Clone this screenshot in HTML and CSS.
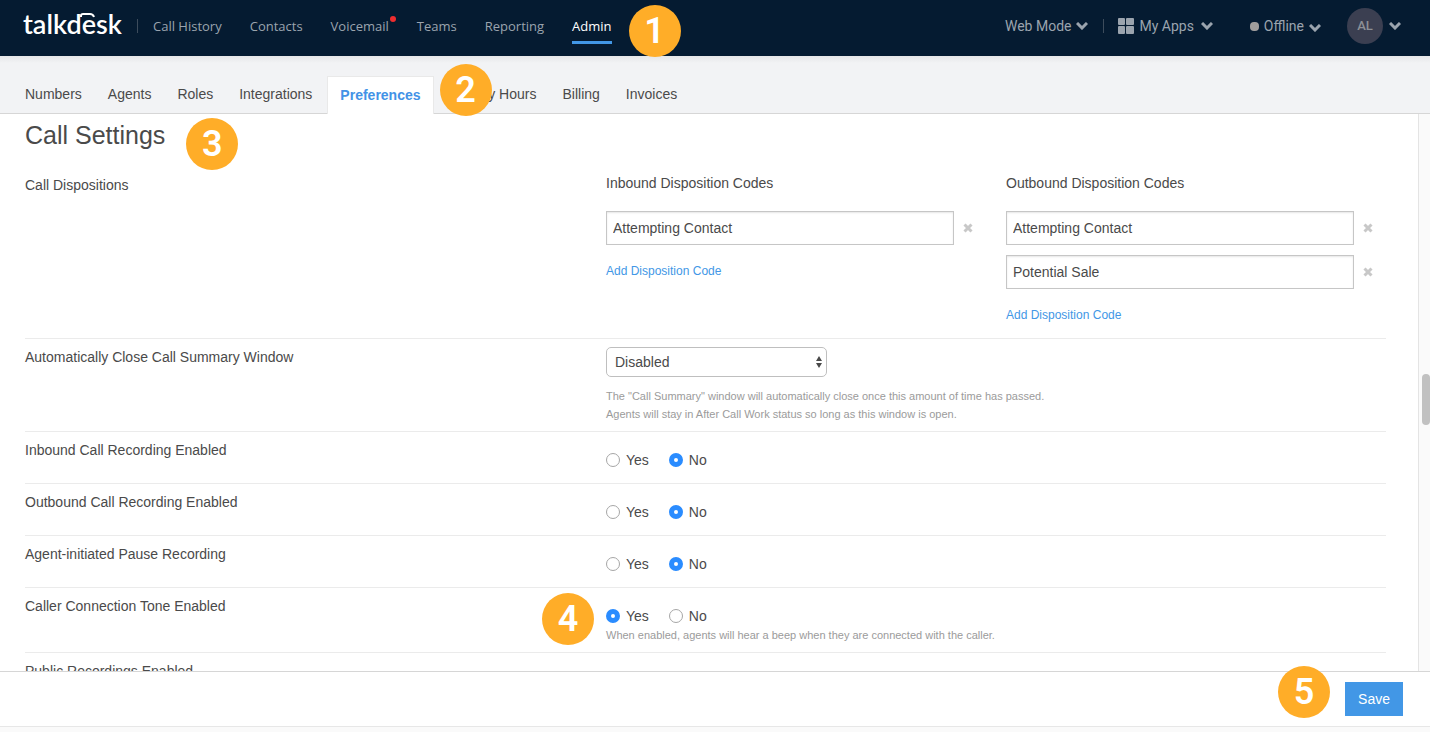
FILE: index.html
```html
<!DOCTYPE html>
<html lang="en">
<head>
    <meta charset="UTF-8">
    <meta name="viewport" content="width=device-width, initial-scale=1.0">
    <title>Talkdesk - Preferences</title>
    <link rel="stylesheet" href="styles.css">
</head>
<body>

    <header class="topbar">
        <a href="#" class="logo" aria-label="talkdesk">talkd<span class="logo-e">e<svg class="logo-arc" viewBox="0 0 15 5"><path d="M1 4V2.500Q1 1 3 1h7q3 0 4 3"/></svg></span>sk</a>
        <nav class="main-nav">
            <a href="#">Call History</a>
            <a href="#">Contacts</a>
            <a href="#" class="has-alert">Voicemail</a>
            <a href="#">Teams</a>
            <a href="#">Reporting</a>
            <a href="#" class="active">Admin</a>
            <span class="step step-1">1</span>
        </nav>
        <div class="tools">
            <button class="tool web-mode">Web Mode
                <svg class="chevron" viewBox="0 0 12 8"><path d="m1 1 5 5 5-5"/></svg>
            </button>
            <button class="tool my-apps">
                <svg class="apps-icon" viewBox="0 0 16 16"><rect width="7" height="7" rx="1"/><rect x="8" width="8" height="7" rx="1"/><rect y="8" width="7" height="8" rx="1"/><rect x="8" y="8" width="8" height="8" rx="1"/></svg>
                My Apps
                <svg class="chevron" viewBox="0 0 12 8"><path d="m1 1 5 5 5-5"/></svg>
            </button>
            <button class="tool status">
                <span class="status-dot"></span>Offline
                <svg class="chevron" viewBox="0 0 12 8"><path d="m1 1 5 5 5-5"/></svg>
            </button>
            <button class="tool account">
                <span class="avatar">AL</span>
                <svg class="chevron" viewBox="0 0 12 8"><path d="m1 1 5 5 5-5"/></svg>
            </button>
        </div>
    </header>

    <nav class="tabs">
        <a href="#">Numbers</a>
        <a href="#">Agents</a>
        <a href="#">Roles</a>
        <a href="#">Integrations</a>
        <a href="#" class="current">Preferences</a>
        <a href="#">Holiday Hours<span class="step step-2">2</span></a>
        <a href="#">Billing</a>
        <a href="#">Invoices</a>
    </nav>

    <div class="content">
        <main class="panel">
            <h1>Call Settings<span class="step step-3">3</span></h1>

            <div class="row">
                <div class="row-label">Call Dispositions</div>
                <div class="dispositions">
                    <div class="codes">
                        <h2>Inbound Disposition Codes</h2>
                        <div class="code">
                            <input type="text" value="Attempting Contact" aria-label="Inbound code 1">
                            <button class="remove" aria-label="Remove"><svg viewBox="0 0 10 10"><path d="m1.500 1.500 7 7m0-7-7 7"/></svg></button>
                        </div>
                        <a href="#" class="add">Add Disposition Code</a>
                    </div>
                    <div class="codes">
                        <h2>Outbound Disposition Codes</h2>
                        <div class="code">
                            <input type="text" value="Attempting Contact" aria-label="Outbound code 1">
                            <button class="remove" aria-label="Remove"><svg viewBox="0 0 10 10"><path d="m1.500 1.500 7 7m0-7-7 7"/></svg></button>
                        </div>
                        <div class="code">
                            <input type="text" value="Potential Sale" aria-label="Outbound code 2">
                            <button class="remove" aria-label="Remove"><svg viewBox="0 0 10 10"><path d="m1.500 1.500 7 7m0-7-7 7"/></svg></button>
                        </div>
                        <a href="#" class="add">Add Disposition Code</a>
                    </div>
                </div>
            </div>

            <div class="row">
                <label class="row-label" for="auto-close">Automatically Close Call Summary Window</label>
                <div class="field">
                    <div class="select">
                        <select id="auto-close">
                            <option>Disabled</option>
                        </select>
                        <svg class="select-arrows" viewBox="0 0 6 12"><path d="M3 0l3 5H0zM3 12l3-5H0z"/></svg>
                    </div>
                    <p class="help">The "Call Summary" window will automatically close once this amount of time has passed.<br>Agents will stay in After Call Work status so long as this window is open.</p>
                </div>
            </div>

            <div class="row">
                <div class="row-label">Inbound Call Recording Enabled</div>
                <div class="radios">
                    <label><input type="radio" name="inbound">Yes</label>
                    <label><input type="radio" name="inbound" checked>No</label>
                </div>
            </div>

            <div class="row">
                <div class="row-label">Outbound Call Recording Enabled</div>
                <div class="radios">
                    <label><input type="radio" name="outbound">Yes</label>
                    <label><input type="radio" name="outbound" checked>No</label>
                </div>
            </div>

            <div class="row">
                <div class="row-label">Agent-initiated Pause Recording</div>
                <div class="radios">
                    <label><input type="radio" name="pause">Yes</label>
                    <label><input type="radio" name="pause" checked>No</label>
                </div>
            </div>

            <div class="row">
                <div class="row-label">Caller Connection Tone Enabled</div>
                <div class="tone">
                    <span class="step step-4">4</span>
                    <div class="radios">
                        <label><input type="radio" name="tone" checked>Yes</label>
                        <label><input type="radio" name="tone">No</label>
                    </div>
                    <p class="help">When enabled, agents will hear a beep when they are connected with the caller.</p>
                </div>
            </div>

            <div class="row">
                <div class="row-label">Public Recordings Enabled</div>
            </div>
        </main>
        <div class="scrollbar"><div class="thumb"></div></div>
    </div>

    <footer class="actions">
        <span class="save-wrap">
            <span class="step step-5">5</span>
            <button class="save">Save</button>
        </span>
    </footer>

</body>
</html>
```
FILE: styles.css
```css
* {
    box-sizing: border-box;
}
body {
    margin: 0;
    height: 100vh;
    display: flex;
    flex-direction: column;
    overflow: hidden;
    padding-bottom: 5px;
    background-color: #fafafa;
    font-family: "Liberation Sans", Arial, sans-serif;
    font-size: 14px;
    line-height: 18px;
    color: #4a4a4a;
}
a {
    text-decoration: none;
    color: inherit;
}
button, input, select {
    font: inherit;
    color: inherit;
}
h1, h2, p {
    margin: 0;
    font-weight: normal;
}

/* Top bar */
.topbar {
    display: flex;
    align-items: center;
    height: 56px;
    flex: none;
    padding: 0 29px 4px 23px;
    background-color: #051b31;
    color: #9ba4ae;
}
.logo {
    width: 100px;
    padding-bottom: 4px;
    font-family: Lato, sans-serif;
    font-size: 27px;
    font-weight: 600;
    line-height: 44px;
    color: #fff;
}
.logo-e {
    position: relative;
}
.logo-arc {
    position: absolute;
    left: -2px;
    top: 6px;
    width: 15px;
    height: 5px;
    fill: none;
    stroke: #fff;
    stroke-width: 2;
}
.main-nav {
    position: relative;
    display: flex;
    gap: 28px;
    margin-left: 14px;
    padding-left: 16px;
    font-family: "Open Sans", sans-serif;
    font-size: 13px;
}
.main-nav::before, .my-apps::before {
    content: "";
    position: absolute;
    left: 0;
    top: 2px;
    height: 14px;
    border-left: 1px solid #3d4c5c;
}
.main-nav a {
    position: relative;
}
.main-nav .active {
    color: #fff;
}
.main-nav .active::after {
    content: "";
    position: absolute;
    left: 0;
    right: 0;
    bottom: -9px;
    height: 3px;
    background-color: #4297e6;
}
.has-alert::after {
    content: "";
    position: absolute;
    right: -7px;
    top: -1px;
    width: 6px;
    height: 6px;
    border-radius: 50%;
    background-color: #ee2d2f;
}
.tools {
    display: flex;
    align-items: center;
    margin-left: auto;
    font-family: Roboto, sans-serif;
}
.tool {
    position: relative;
    display: flex;
    align-items: center;
    gap: 5px;
    padding: 0;
    border: 0;
    background: none;
}
.chevron {
    width: 12px;
    height: 8px;
    fill: none;
    stroke: currentColor;
    stroke-width: 3;
}
.my-apps {
    margin-left: 15px;
    padding-left: 15px;
}
.my-apps .chevron {
    margin-left: 2px;
}
.apps-icon {
    width: 16px;
    height: 16px;
    fill: currentColor;
}
.status {
    margin-left: 37px;
}
.status .chevron {
    margin-top: 4px;
}
.status-dot {
    width: 9px;
    height: 9px;
    border-radius: 4px;
    background-color: #a09e9d;
}
.account {
    gap: 6px;
    margin-left: 26px;
}
.avatar {
    width: 36px;
    height: 36px;
    border-radius: 50%;
    background-color: #3b3f51;
    color: #8d9096;
    font-size: 13px;
    font-weight: 500;
    line-height: 36px;
}

/* Section tabs */
.tabs {
    display: flex;
    align-items: flex-end;
    flex: none;
    height: 58px;
    padding: 0 12px;
    background: linear-gradient(#e6e7e8, #f2f3f5 7px);
    border-bottom: 1px solid #d6d6d6;
}
.tabs a {
    position: relative;
    height: 37px;
    padding: 9px 13px 0;
}
.tabs .current {
    height: 38px;
    margin: 0 2px -1px;
    background-color: #fff;
    border: 1px solid #e9e9e9;
    border-width: 1px 1px 0;
    padding: 9px 12px 0;
    font-weight: bold;
    color: #4292e6;
}

/* Settings */
.content {
    display: flex;
    flex: 1;
    min-height: 0;
}
.panel {
    flex: 1;
    overflow: hidden;
    padding: 6px 32px 0 25px;
    background-color: #fff;
    border-right: 1px solid #e4e4e4;
}
h1 {
    position: relative;
    width: max-content;
    margin-bottom: 17px;
    font-size: 25px;
    line-height: 30px;
}
h2 {
    margin-bottom: 19px;
    font-size: 14px;
}
.row {
    display: grid;
    grid-template-columns: 581fr 780fr;
    border-bottom: 1px solid #ebebeb;
    min-height: 52px;
    padding-bottom: 8px;
}
.row-label {
    padding-top: 9px;
}
.dispositions {
    display: grid;
    grid-template-columns: 1fr 1fr;
    gap: 20px;
    padding: 7px 0 6px;
}
.code {
    display: flex;
    align-items: center;
    gap: 9px;
    margin-bottom: 10px;
}
.code input {
    flex: 1;
    min-width: 0;
    height: 34px;
    padding: 0 6px;
    border: 1px solid #c6c6c6;
    border-radius: 0;
    box-shadow: inset 0 1px 2px rgba(0, 0, 0, 0.1);
}
.remove {
    width: 23px;
    padding: 0;
    border: 0;
    background: none;
    text-align: left;
}
.remove svg {
    width: 10px;
    height: 10px;
    stroke: #c8c8c8;
    stroke-width: 3;
}
.add {
    display: block;
    width: max-content;
    padding-top: 7px;
    font-size: 12px;
    color: #4297e6;
}
.field {
    padding-top: 8px;
}
.select {
    position: relative;
    width: 221px;
    margin-bottom: 10px;
}
.select select {
    display: block;
    appearance: none;
    width: 100%;
    height: 30px;
    padding: 0 24px 0 8px;
    background-color: #fff;
    border: 1px solid #bfbfbf;
    border-radius: 5px;
}
.select-arrows {
    position: absolute;
    right: 5px;
    top: 9px;
    width: 6px;
    height: 12px;
    fill: #4a4a4a;
    pointer-events: none;
}
.help {
    font-size: 11px;
    color: #9b9b9b;
}
.radios {
    display: flex;
    gap: 20px;
    padding-top: 18px;
    line-height: 20px;
}
.radios label {
    display: flex;
    align-items: center;
    gap: 6px;
    height: 20px;
}
.radios input {
    appearance: none;
    width: 14px;
    height: 14px;
    margin: 0;
    border: 1px solid #a6a6a6;
    border-radius: 50%;
}
.radios input:checked {
    border: 5px solid #2a8cff;
}
.tone {
    position: relative;
}

/* Scrollbar */
.scrollbar {
    display: flex;
    flex-direction: column;
    align-items: flex-end;
    width: 11px;
    padding-top: 260px;
}
.thumb {
    width: 8px;
    height: 51px;
    border-radius: 4px;
    background-color: #c1c1c1;
}

/* Save bar */
.actions {
    display: flex;
    justify-content: flex-end;
    flex: none;
    padding: 10px 27px;
    background-color: #fff;
    border-top: 1px solid #d6d6d6;
    border-bottom: 1px solid #e7e7e7;
}
.save-wrap {
    position: relative;
}
.save {
    display: block;
    height: 34px;
    padding: 0 13px;
    border: 0;
    background-color: #4297e6;
    color: #fff;
}

/* Numbered steps */
.step {
    position: absolute;
    z-index: 5;
    width: 52px;
    height: 52px;
    border-radius: 50%;
    background-color: #ffad28;
    color: #fff;
    font-family: Roboto, sans-serif;
    font-size: 36px;
    font-weight: 600;
    line-height: 52px;
    text-align: center;
}
.step-1 {
    left: calc(100% + 17px);
    top: -12px;
}
.step-2 {
    left: 4px;
    top: -12px;
}
.step-3 {
    left: calc(100% + 21px);
    top: -2px;
}
.step-4 {
    right: calc(100% + 12px);
    top: 5px;
}
.step-5 {
    right: calc(100% + 15px);
    top: -16px;
}
```
